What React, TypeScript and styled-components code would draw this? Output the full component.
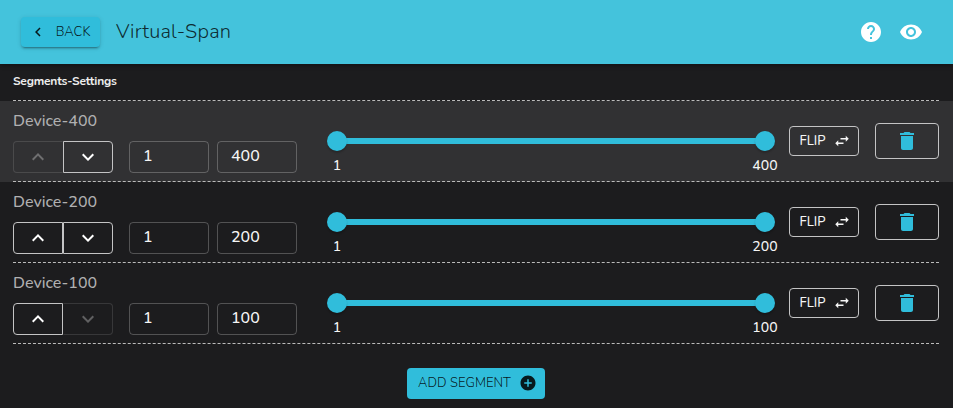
import React from 'react';
import styled, { createGlobalStyle } from 'styled-components';
import { MdAddCircle, MdChevronLeft, MdDelete, MdExpandLess, MdExpandMore, MdHelp, MdSwapHoriz, MdVisibility } from 'react-icons/md';

const GlobalStyle = createGlobalStyle`
  *, *::before, *::after { box-sizing: border-box; }
  body { margin: 0; background: #1c1c1e; color: #f5f5f5; font-family: Nunito, "Open Sans", "Noto Sans", sans-serif; overflow: hidden; }
  button, input { font: inherit; }
`;

const Page = styled.div`
  height: 408px;
  background: #1c1c1e;
`;

const Header = styled.header`
  position: relative;
  display: flex;
  align-items: center;
  height: 64px;
  padding: 0 30px 0 21px;
  background: #44c3dc;
  color: #fff;
  box-shadow: 0 2px 4px rgba(0, 0, 0, 0.3);
`;

const Label = styled.span<{ $size: number; $width: number; $weight?: number; $spacing?: number }>`
  display: block;
  width: ${p => p.$width}px;
  font-size: ${p => p.$size}px;
  font-weight: ${p => p.$weight ?? 400};
  letter-spacing: ${p => p.$spacing ?? 0}px;
  white-space: nowrap;
`;

const BackButton = styled.button`
  display: flex;
  align-items: center;
  width: 79px;
  height: 30px;
  padding: 0 0 0 8px;
  gap: 8px;
  border: 0;
  border-radius: 4px;
  background: #30bddb;
  color: rgba(0, 0, 0, 0.87);
  box-shadow: 0 3px 1px -2px rgba(0, 0, 0, 0.2), 0 2px 2px rgba(0, 0, 0, 0.14), 0 1px 5px rgba(0, 0, 0, 0.12);
`;

const Title = styled.h1`
  flex: 1;
  margin: 0 0 0 16px;
  color: rgba(0, 0, 0, 0.8);
  font-size: 20px;
  font-weight: 300;
  letter-spacing: 0.22px;
  line-height: 32px;
`;

const HeaderIcons = styled.div`
  display: flex;
  gap: 16px;
`;

const SectionTitle = styled.h2`
  display: flex;
  align-items: center;
  height: 37px;
  margin: 0 14px 0 13px;
  padding-bottom: 3px;
  border-bottom: 1px dashed #bbb;
  color: #eee;
  font-size: 12px;
  letter-spacing: -0.2px;
`;

const Row = styled.section<{ $active: boolean }>`
  height: 81px;
  padding: 0 14px 0 13px;
  background: ${p => (p.$active ? '#313133' : 'transparent')};
`;

const RowContent = styled.div`
  display: flex;
  height: 81px;
  border-bottom: 1px dashed #bbb;
`;

const Controls = styled.div`
  width: 284px;
  padding-top: 8px;
`;

const DeviceName = styled.div`
  height: 24px;
  line-height: 24px;
  color: #b0b0b1;
  font-weight: 500;
`;

const ControlLine = styled.div`
  display: flex;
  margin-top: 8px;
`;

const MoveButton = styled.button<{ $side: 'left' | 'right' }>`
  display: grid;
  place-items: center;
  width: 50px;
  height: 32px;
  padding: 0;
  border: 1px solid #c4c4c5;
  border-radius: ${p => (p.$side === 'left' ? '4px 0 0 4px' : '0 4px 4px 0')};
  background: transparent;
  color: #fff;
  &:disabled {
    border-color: rgba(255, 255, 255, 0.12);
    border-${p => (p.$side === 'left' ? 'right' : 'left')}-color: transparent;
    color: rgba(255, 255, 255, 0.3);
  }
`;

const NumberInput = styled.input<{ $first?: boolean }>`
  width: 80px;
  height: 32px;
  margin-left: ${p => (p.$first ? 16 : 8)}px;
  padding: 0 13px 2px;
  border: 1px solid rgba(255, 255, 255, 0.24);
  border-radius: 4px;
  outline: 0;
  background: transparent;
  color: #f5f5f5;
  font-size: 16px;
  font-weight: 500;
`;

const Range = styled.div`
  width: 462px;
  margin-left: 30px;
  padding-top: 30px;
`;

const Track = styled.div`
  display: flex;
  align-items: center;
  justify-content: space-between;
  width: 448px;
  height: 20px;
  background: linear-gradient(#30bddb, #30bddb) center / 430px 6px no-repeat;
`;

const Thumb = styled.span`
  width: 20px;
  height: 20px;
  border-radius: 50%;
  background: #30bddb;
  box-shadow: 0 2px 2px rgba(0, 0, 0, 0.2);
`;

const Marks = styled.div`
  display: flex;
  justify-content: space-between;
  width: 448px;
  margin-top: 5px;
  font-size: 14px;
  font-weight: 500;
  letter-spacing: 0.15px;
  line-height: 20px;
`;

const Mark = styled.span`
  display: flex;
  justify-content: center;
  width: 20px;
`;

const FlipButton = styled.button`
  display: flex;
  align-items: center;
  width: 70px;
  height: 30px;
  margin-top: 25px;
  padding: 0 7px 0 9px;
  border: 1px solid #c4c4c5;
  border-radius: 4px;
  background: transparent;
  color: #f5f5f5;
  justify-content: space-between;
`;

const DeleteButton = styled.button`
  display: grid;
  place-items: center;
  width: 64px;
  height: 36px;
  margin: 22px 0 0 16px;
  padding: 0;
  border: 1px solid #c4c4c5;
  border-radius: 4px;
  background: transparent;
  color: #30bddb;
`;

const Footer = styled.footer`
  display: flex;
  justify-content: center;
  padding-top: 24px;
`;

const AddButton = styled.button`
  display: flex;
  align-items: center;
  justify-content: space-between;
  width: 138px;
  height: 31px;
  margin-right: 1px;
  padding: 0 8px 2px 11px;
  border: 0;
  border-radius: 4px;
  background: #30bddb;
  color: rgba(0, 0, 0, 0.87);
`;

const devices = [400, 200, 100];

export default function App() {
  return (
    <Page>
      <GlobalStyle />
      <Header>
        <BackButton>
          <MdChevronLeft size={18} />
          <Label $size={13} $width={36} $weight={300} $spacing={0.05}>BACK</Label>
        </BackButton>
        <Title>Virtual-Span</Title>
        <HeaderIcons>
          <MdHelp size={24} />
          <MdVisibility size={24} />
        </HeaderIcons>
      </Header>
      <SectionTitle>Segments-Settings</SectionTitle>
      {devices.map((count, i) => (
        <Row key={count} $active={i === 0}>
          <RowContent>
            <Controls>
              <DeviceName>Device-{count}</DeviceName>
              <ControlLine>
                <MoveButton $side="left" disabled={i === 0}><MdExpandLess size={24} /></MoveButton>
                <MoveButton $side="right" disabled={i === devices.length - 1}><MdExpandMore size={24} /></MoveButton>
                <NumberInput $first defaultValue={1} />
                <NumberInput defaultValue={count} />
              </ControlLine>
            </Controls>
            <Range>
              <Track><Thumb /><Thumb /></Track>
              <Marks><Mark>1</Mark><Mark>{count}</Mark></Marks>
            </Range>
            <FlipButton><Label $size={13} $width={27} $weight={500}>FLIP</Label><MdSwapHoriz size={18} /></FlipButton>
            <DeleteButton><MdDelete size={24} /></DeleteButton>
          </RowContent>
        </Row>
      ))}
      <Footer>
        <AddButton><Label $size={13} $width={93} $weight={300} $spacing={0.05}>ADD SEGMENT</Label><MdAddCircle size={18} /></AddButton>
      </Footer>
    </Page>
  );
}
